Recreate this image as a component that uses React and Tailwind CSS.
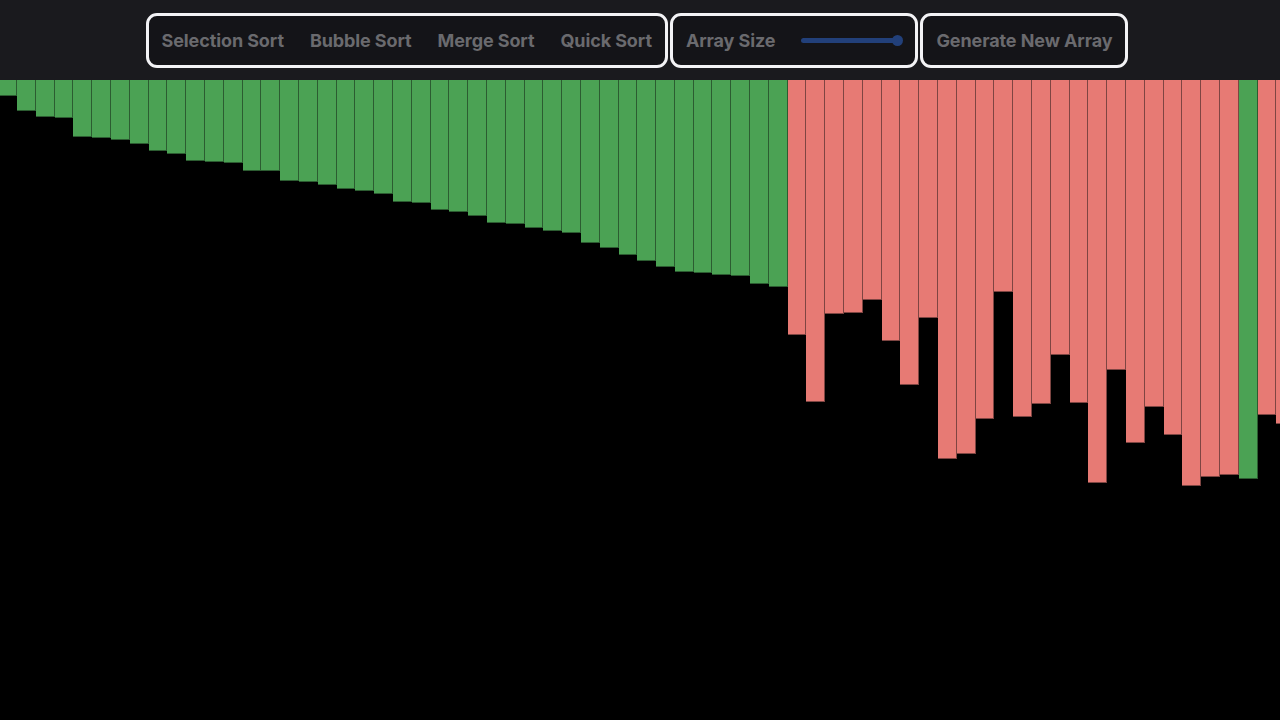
import React from 'react'

const heights = [
  16, 31, 36.7, 37.7, 56.7, 57.7, 60, 64, 70.7, 73.7, 80.7, 81.7, 83, 90.7, 90.7, 100.7, 101.7,
  104.7, 108.7, 111.3, 113.7, 121.7, 122.7, 129.7, 132, 136, 142.7, 144, 148, 151, 152.7, 162.7,
  168, 175, 180.7, 186.7, 192, 193.3, 194.7, 196, 204, 206.7,
  255, 321.7, 234.3, 232.7, 220, 260.7, 305.3, 238.3, 379, 373.7, 339, 212.3, 336.7, 324, 274.7,
  323, 402.7, 289.7, 362.7, 326.7, 354.7, 405.7, 396.7, 394.7, 398.7, 335, 344.3,
]

// sorted prefix + the one settled bar near the end
const isDone = (i) => i < 42 || i === 66

function Bar({ h, done }) {
  return (
    <div
      className={
        'w-[18.8px] shrink-0 border-r border-b box-border ' +
        (done ? 'bg-[#4ba254] border-[#2c5c31]' : 'bg-[#e77a74] border-[#7e4542]')
      }
      style={{ height: h }}
    />
  )
}

const font = { fontFamily: 'Inter, "Noto Sans", sans-serif' }

function Group({ children }) {
  return (
    <div className="h-[55px] flex items-center rounded-[11px] border-[3px] border-[#f3f3f6] bg-[#141418]">
      {children}
    </div>
  )
}

function Btn({ children }) {
  return (
    <button className="px-[13px] pt-[2px] text-[18px] font-bold text-[#6a6a6e] tracking-[-0.1px] leading-none">
      {children}
    </button>
  )
}

export default function App() {
  return (
    <div className="min-h-screen bg-black flex flex-col" style={font}>
      <header className="h-20 bg-[#1a1a1e] flex items-center justify-center gap-[2px] pr-[6px]">
        <Group>
          <Btn>Selection Sort</Btn>
          <Btn>Bubble Sort</Btn>
          <Btn>Merge Sort</Btn>
          <Btn>Quick Sort</Btn>
        </Group>
        <Group>
          <Btn>Array Size</Btn>
          <div className="ml-[13px] mr-[12px] w-[102px] flex items-center">
            <div className="h-[5px] flex-1 rounded-full bg-[#22407a]" />
            <div className="w-[11px] h-[11px] -ml-[6px] rounded-full bg-[#22407a]" />
          </div>
        </Group>
        <Group>
          <Btn>Generate New Array</Btn>
        </Group>
      </header>
      <main className="flex-1 overflow-hidden">
        <div className="flex items-start ml-[-1.8px]">
          {heights.map((h, i) => (
            <Bar key={i} h={h} done={isDone(i)} />
          ))}
        </div>
      </main>
    </div>
  )
}
